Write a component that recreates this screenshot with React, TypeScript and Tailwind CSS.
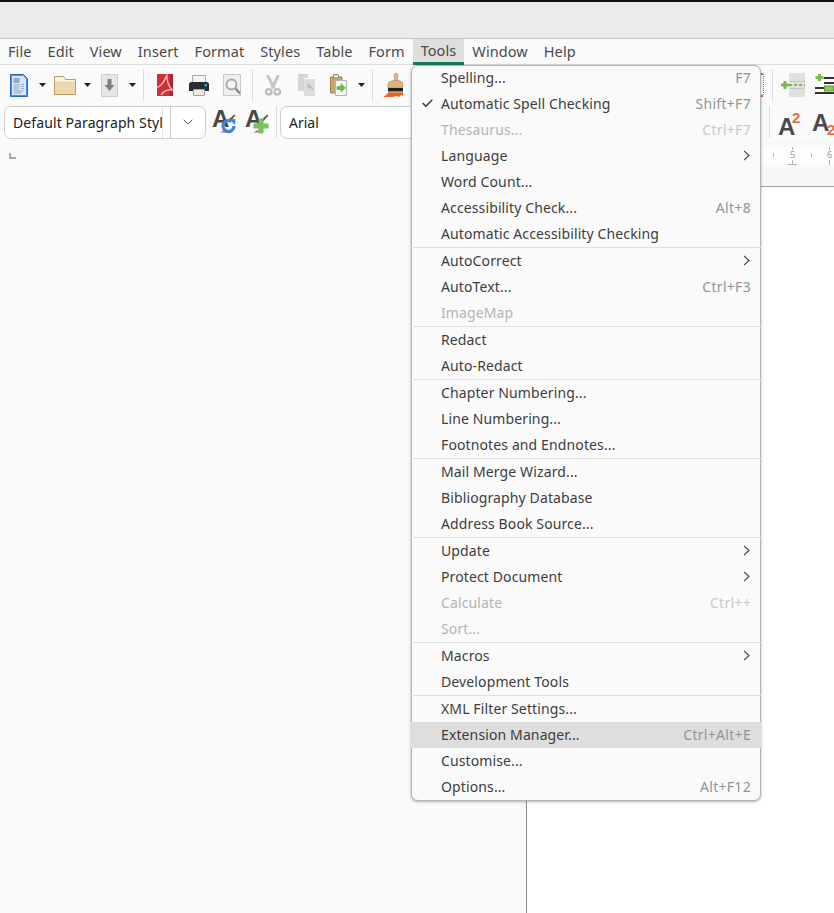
import React from "react"
import { Check, ChevronDown } from "lucide-react"

const menuBar = ["File", "Edit", "View", "Insert", "Format", "Styles", "Table", "Form", "Tools", "Window", "Help"]

type Item = { label: string; shortcut?: string; disabled?: boolean; checked?: boolean; submenu?: boolean; hover?: boolean }

const sections: Item[][] = [
  [
    { label: "Spelling...", shortcut: "F7" },
    { label: "Automatic Spell Checking", shortcut: "Shift+F7", checked: true },
    { label: "Thesaurus...", shortcut: "Ctrl+F7", disabled: true },
    { label: "Language", submenu: true },
    { label: "Word Count..." },
    { label: "Accessibility Check...", shortcut: "Alt+8" },
    { label: "Automatic Accessibility Checking" },
  ],
  [
    { label: "AutoCorrect", submenu: true },
    { label: "AutoText...", shortcut: "Ctrl+F3" },
    { label: "ImageMap", disabled: true },
  ],
  [{ label: "Redact" }, { label: "Auto-Redact" }],
  [{ label: "Chapter Numbering..." }, { label: "Line Numbering..." }, { label: "Footnotes and Endnotes..." }],
  [{ label: "Mail Merge Wizard..." }, { label: "Bibliography Database" }, { label: "Address Book Source..." }],
  [
    { label: "Update", submenu: true },
    { label: "Protect Document", submenu: true },
    { label: "Calculate", shortcut: "Ctrl++", disabled: true },
    { label: "Sort...", disabled: true },
  ],
  [{ label: "Macros", submenu: true }, { label: "Development Tools" }],
  [
    { label: "XML Filter Settings..." },
    { label: "Extension Manager...", shortcut: "Ctrl+Alt+E", hover: true },
    { label: "Customise..." },
    { label: "Options...", shortcut: "Alt+F12" },
  ],
]

function Caret({ className }: { className: string }) {
  return (
    <svg width="7" height="4" viewBox="0 0 7 4" className={`shrink-0 ${className}`}>
      <path d="M0 0h7L3.500 4z" fill="#222" />
    </svg>
  )
}

function Sep({ className }: { className: string }) {
  return <div className={`w-px shrink-0 bg-[#dcdcdc] ${className}`} />
}

function DocIcon() {
  return (
    <svg width="18" height="23" viewBox="0 0 18 23" className="shrink-0">
      <path d="M.5.5h13l4 4v18H.5z" fill="#a9cbf3" stroke="#2d66b5" />
      <path d="M1.500 1.500h11.500l3.500 3.500v16.500H1.500z" fill="#d7e6f8" stroke="#4b90e8" />
      <path d="M3.500 4h6v5h-6z" fill="#93a8c0" />
      <path d="M3.500 11h6M3.500 13h6M3.500 15h6M3.500 17h10M3.500 19h8M11 10.500h3M11 12.500h3M11 14.500h3" stroke="#93a8c0" />
    </svg>
  )
}

function FolderIcon() {
  return (
    <svg width="22" height="20" viewBox="0 0 22 20" className="ml-[8px] shrink-0">
      <path d="M.5 19.500V1.500h9l2 3h10v15z" fill="#eed8ae" stroke="#b89a66" />
      <path d="M1 2h8.200l2 3H21v1.500H1z" fill="#f9f4e8" />
    </svg>
  )
}

function SaveIcon() {
  return (
    <svg width="17" height="23" viewBox="0 0 17 23" className="ml-[10px] shrink-0">
      <rect x=".5" y=".5" width="16" height="22" fill="#e6e6e6" stroke="#cfcfcf" />
      <path d="M6.500 5h4v6h3l-5 6-5-6h3z" fill="#7f7f7f" />
    </svg>
  )
}

function PdfIcon() {
  return (
    <svg width="16" height="22" viewBox="0 0 16 22" className="ml-[13px] shrink-0">
      <rect width="16" height="22" fill="#cf3038" />
      <path d="M13 0v22h3V0z" fill="#b3262e" />
      <path d="M10 .5C8 7 5 11 .5 13.500M10 .5c-.5 7 1 11 5 15.500-4-.5-8 .5-11 5" fill="none" stroke="#f2c9c9" strokeWidth="1.300" />
    </svg>
  )
}

function PrintIcon() {
  return (
    <svg width="20" height="21" viewBox="0 0 20 21" className="ml-[16px] shrink-0">
      <path d="M3.500.5h13v8h-13z" fill="#f2f2f2" stroke="#a8a8a8" />
      <path d="M2.500 7h15a2.500 2.500 0 0 1 2.500 2.500V16H0V9.500A2.500 2.500 0 0 1 2.500 7z" fill="#2a2d30" />
      <rect x="15.500" y="9" width="2.500" height="2.500" fill="#2f9fd8" />
      <path d="M4.500 14.500h11v6h-11z" fill="#eaeaea" stroke="#a0a0a0" />
    </svg>
  )
}

function PreviewIcon() {
  return (
    <svg width="18" height="22" viewBox="0 0 18 22" className="ml-[14px] shrink-0">
      <rect x=".5" y=".5" width="17" height="21" fill="#eeeeee" stroke="#c8c8c8" />
      <circle cx="8.500" cy="10.500" r="5" fill="#f4f4f4" stroke="#a6a6a6" strokeWidth="1.800" />
      <path d="M12.500 14.500l4.500 5" stroke="#94826e" strokeWidth="2.200" />
    </svg>
  )
}

function CutIcon() {
  return (
    <svg width="16" height="21" viewBox="0 0 16 21" className="ml-[12px] shrink-0">
      <path d="M2.500 0l6.500 13.500M13.500 0L7 13.500" stroke="#c6c6c6" strokeWidth="3" />
      <circle cx="3.700" cy="16.800" r="2.800" fill="none" stroke="#bcbcbc" strokeWidth="2.200" />
      <circle cx="12.300" cy="16.800" r="2.800" fill="none" stroke="#bcbcbc" strokeWidth="2.200" />
    </svg>
  )
}

function CopyIcon() {
  return (
    <svg width="17" height="22" viewBox="0 0 17 22" className="ml-[17px] shrink-0">
      <path d="M0 0h10v4H6v13H0z" fill="#d6d6d6" />
      <path d="M6 5h11v17H6z" fill="#dddddd" />
      <path d="M14.500 16c0-3-1.500-4-5-4m2.500-2.500L9.500 12l2.500 2.500" fill="none" stroke="#bababa" strokeWidth="1.400" />
    </svg>
  )
}

function PasteIcon() {
  return (
    <svg width="17" height="22" viewBox="0 0 17 22" className="ml-[15px] shrink-0">
      <path d="M.5 3h11.500v16H.5z" fill="#cba672" stroke="#a17e4e" />
      <path d="M3.500.5h5v3.500h-5z" fill="#ececec" stroke="#8c8c8c" />
      <path d="M5.500 6.500h11v15h-11z" fill="#f6f6f6" stroke="#b4b4b4" />
      <path d="M7 15.500v-3h4V9.500l4.500 4.500-4.500 4v-2.500z" fill="#6cc04a" stroke="#4f9e33" strokeWidth=".5" />
    </svg>
  )
}

function BrushIcon() {
  return (
    <svg width="20" height="24" viewBox="0 0 20 24" className="ml-[10px] shrink-0">
      <path d="M13 0c1.500 0 2 1.500 1.700 3.500l-.5 4.500h-2.400l-.5-4.500C11 1.500 11.500 0 13 0z" fill="#dcb987" stroke="#ab8750" strokeWidth=".6" />
      <path d="M5 11c0-2 3-3.500 8-3.500s7 1.500 7 3.500v4H5z" fill="#dab57e" stroke="#ab8750" strokeWidth=".6" />
      <rect x="5" y="15" width="15" height="4" fill="#1f1f1f" />
      <rect x="5" y="18" width="15" height="1.500" fill="#8c8c8c" />
      <path d="M5 19.500h15V23l-2-1-2 2-3-1-3 1H0c2-1 4-2 5-4.500z" fill="#e8641c" />
    </svg>
  )
}

function StyleIcon({ kind, className }: { kind: "update" | "new"; className: string }) {
  return (
    <div className={`relative h-[24px] w-[24px] shrink-0 font-['Liberation_Sans',sans-serif] ${className}`}>
      <span className="absolute left-0 top-[-3px] text-[24px] font-bold leading-none text-[#474747]">A</span>
      <svg width="24" height="24" viewBox="0 0 24 24" className="absolute left-0 top-0">
        <path d="M8 22.500l5-2.500 2 2.500z" fill="#e23fd0" />
        <path d="M16 10l6.500-5.500 1 1L18 11.500z" fill="#6b4a2a" />
        {kind === "update" ? (
          <>
            <path d="M22 16a5.500 5.500 0 1 1-2.500-4.600" fill="none" stroke="#3a84dc" strokeWidth="3.200" />
            <path d="M17.500 9.500l6-.5-.5 6z" fill="#3a84dc" />
          </>
        ) : (
          <path d="M13.500 8.500h5v5h5v5h-5v5h-5v-5h-5v-5h5z" fill="#79c45a" />
        )}
      </svg>
    </div>
  )
}

function RowIcon() {
  return (
    <svg width="24" height="24" viewBox="0 0 24 24" className="ml-[8px] shrink-0">
      <rect x="8" y="0" width="16" height="24" fill="#e0e0e0" />
      <path d="M8 8.500h16M8 15.500h16" stroke="#c6c6c6" />
      <path d="M8 12h16" stroke="#7dbb4e" strokeWidth="2" strokeDasharray="3 2" />
      <path d="M2.500 8h3v2.500H8v3H5.500V16h-3v-2.500H0v-3h2.500z" fill="#7dbb4e" />
    </svg>
  )
}

function ListIcon() {
  return (
    <svg width="24" height="24" viewBox="0 0 24 24" className="ml-[10px] shrink-0">
      <path d="M9 5h15M9 10h15M0 15h24M0 20h24" stroke="#333" strokeWidth="1.800" />
      <path d="M3 1h3v2h2.500v3H6v2H3V6H.5V3H3z" fill="#7dbb4e" />
      <rect x="9.500" y="13" width="9" height="5" fill="#8cc85e" stroke="#5f9a38" />
    </svg>
  )
}

function Ruler() {
  return (
    <svg width="307" height="18" viewBox="0 0 307 18" className="block">
      {[246, 284].map((x) => (
        <path key={x} d={`M${x}.5 6v4`} stroke="#b5b5b5" />
      ))}
      <path d="M265.500 0v3M265.500 13v5M261 17.500h9" stroke="#b0b0b0" />
      <path d="M302.500 0v3M302.500 13v5" stroke="#b0b0b0" />
      <text x="265.500" y="11" textAnchor="middle" fontSize="9" fontFamily="'Noto Sans', sans-serif" fill="#9a9a9a">5</text>
      <text x="302.500" y="11" textAnchor="middle" fontSize="9" fontFamily="'Noto Sans', sans-serif" fill="#9a9a9a">6</text>
    </svg>
  )
}

function MenuRow({ item }: { item: Item }) {
  const labelColor = item.disabled ? "text-[#b4b4b4]" : "text-[#3d3d3d]"
  const keyColor = item.disabled ? "text-[#c8c8c8]" : "text-[#949494]"
  return (
    <div className={`flex h-[26px] items-center pb-[2px] pl-[10px] pr-[10px] ${item.hover ? "bg-[#dedede]" : ""}`}>
      <div className="w-[20px] shrink-0">
        {item.checked && <Check size={13} strokeWidth={3} className="text-[#3d3d3d]" />}
      </div>
      <span className={`flex-1 ${labelColor}`}>{item.label}</span>
      {item.shortcut && <span className={`tracking-[0.3px] ${keyColor}`}>{item.shortcut}</span>}
      {item.submenu && (
        <svg width="7" height="11" viewBox="0 0 7 11" className="mr-[1px] mt-[1px]">
          <path d="M1 .8l5 4.700-5 4.700" fill="none" stroke="#3d3d3d" strokeWidth="1.100" />
        </svg>
      )}
    </div>
  )
}

export default function App() {
  return (
    <div className="relative flex h-[913px] w-[834px] flex-col overflow-hidden bg-[#fafafa] font-['Noto_Sans',sans-serif] text-[14px] text-[#3d3d3d]">
      <div className="h-[39px] shrink-0 border-t-2 border-b border-t-[#111] border-b-[#c4c4c4] bg-[#ebebeb]" />

      <div className="flex h-[26px] shrink-0 items-stretch border-b border-[#dcdcdc] text-[14.5px] tracking-[0.08px] text-[#4a4a4a]">
        {menuBar.map((m) => (
          <div
            key={m}
            className={`flex items-center px-2 ${m === "Tools" ? "h-[26px] border-b-[3px] border-[#0e7c56] bg-[#dedede]" : ""}`}
          >
            {m}
          </div>
        ))}
      </div>

      <div className="flex h-[38px] w-max shrink-0 items-center pl-[10px] pt-[2px]">
        <DocIcon />
        <Caret className="ml-[11px]" />
        <FolderIcon />
        <Caret className="ml-[8px]" />
        <SaveIcon />
        <Caret className="ml-[11px]" />
        <Sep className="ml-[7px] h-[32px]" />
        <PdfIcon />
        <PrintIcon />
        <PreviewIcon />
        <Sep className="ml-[11px] h-[32px]" />
        <CutIcon />
        <CopyIcon />
        <PasteIcon />
        <Caret className="ml-[11px]" />
        <Sep className="ml-[7px] h-[32px]" />
        <BrushIcon />
        <div className="ml-[358px] h-[24px] w-[3px] shrink-0 border-y-2 border-r border-dotted border-y-[#e8641c] border-r-[#888]" />
        <Sep className="ml-[8px] h-[32px]" />
        <RowIcon />
        <ListIcon />
      </div>

      <div className="flex h-[38px] w-max shrink-0 items-center pl-[4px]">
        <div className="flex h-[33px] w-[202px] shrink-0 items-stretch overflow-hidden rounded-[7px] border border-[#cdcdcd] bg-white">
          <div className="w-[158px] shrink-0 overflow-hidden whitespace-nowrap border-r border-[#e2e2e2] pl-[8px] leading-[31px] tracking-[0.1px] text-[#222]">
            Default Paragraph Style
          </div>
          <div className="ml-[7px] flex flex-1 items-center justify-center border-l border-[#cdcdcd]">
            <ChevronDown size={16} strokeWidth={1.500} className="text-[#555]" />
          </div>
        </div>
        <StyleIcon kind="update" className="ml-[6px]" />
        <StyleIcon kind="new" className="ml-[9px]" />
        <Sep className="ml-[7px] h-[32px]" />
        <div className="ml-[3px] h-[33px] w-[200px] shrink-0 rounded-[7px] border border-[#cdcdcd] bg-white pl-[8px] leading-[31px] text-[#222]">
          Arial
        </div>
        <Sep className="ml-[289px] h-[32px]" />
        <div className="relative ml-[8px] h-[32px] w-[22px] shrink-0 font-['Liberation_Sans',sans-serif] font-bold">
          <span className="absolute bottom-[-1px] left-0 text-[24px] leading-none text-[#4a4a4a]">A</span>
          <span className="absolute left-[14px] top-[4px] text-[15px] leading-none text-[#e8703a]">2</span>
        </div>
        <div className="relative ml-[11px] h-[32px] w-[23px] shrink-0 font-['Liberation_Sans',sans-serif] font-bold">
          <span className="absolute left-[1px] top-[5px] text-[24px] leading-none text-[#4a4a4a]">A</span>
          <span className="absolute bottom-[1px] left-[16px] text-[15px] leading-none text-[#e8703a]">2</span>
        </div>
      </div>

      <div className="flex min-h-0 flex-1">
        <div className="w-[527px] shrink-0 border-r border-[#8c8c8c] pl-[9px] pt-[12px]">
          <div className="h-[6px] w-[7px] border-b-2 border-l-2 border-[#aaaaaa]" />
        </div>
        <div className="flex flex-1 flex-col bg-white">
          <div className="h-[46px] shrink-0 border-b border-[#a0a0a0] bg-[#f8f8f8] pt-[6px]">
            <div className="bg-[#fdfdfd]">
              <Ruler />
            </div>
          </div>
        </div>
      </div>

      <div className="absolute left-[411px] top-[65px] w-[350px] rounded-[7px] border border-[#b4b4b4] bg-[#fafafa] shadow-[0_1px_3px_rgba(0,0,0,0.3)]">
        <div className="-mx-px -mt-px overflow-hidden rounded-[7px] tracking-[0.12px]">
          {sections.map((items, i) => (
            <div key={i} className={i > 0 ? "border-t border-[#e0e0e0]" : ""}>
              {items.map((item) => (
                <MenuRow key={item.label} item={item} />
              ))}
            </div>
          ))}
        </div>
      </div>
    </div>
  )
}
